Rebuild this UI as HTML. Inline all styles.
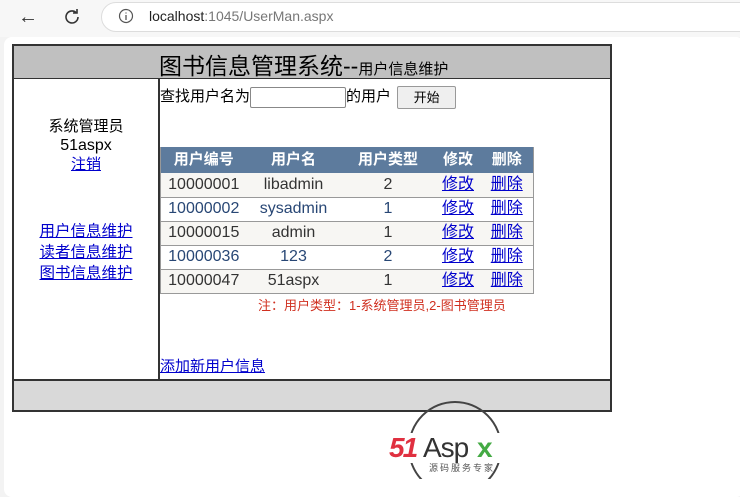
<!DOCTYPE html>
<html><head><meta charset="utf-8"><style>
*{margin:0;padding:0;box-sizing:border-box}
body{width:740px;height:479px;background:#f3f3f3;position:relative;overflow:hidden;font-family:"Liberation Sans","Noto Sans CJK SC",sans-serif;font-size:15px;color:#000}
.a{position:absolute}
a{color:#00c;text-decoration:underline}
.page{left:4px;top:37px;width:740px;height:460px;background:#fff;border-radius:8px}
.g{left:160px;top:147px;width:374px;border-collapse:collapse;font-size:16px}
.g td,.g th{height:24px;line-height:22px;text-align:center;border-bottom:1px solid #999;padding:0}
.g th{background:#5d7b9d;color:#fff;font-weight:bold;height:26px;border:none;font-size:15px}
.g tr.o td{background:#f7f6f3;color:#333}
.g tr.e td{background:#fff;color:#284775}
.g{border-left:1px solid #999;border-right:1px solid #999}
</style></head><body>
<div class="a" style="left:0;top:0;width:740px;height:37px;background:#f7f7f7"></div>
<div class="a" style="left:18px;top:6px;font-size:20px;color:#333">&#8592;</div>
<svg class="a" style="left:62px;top:7px" width="20" height="20" viewBox="0 0 20 20"><path d="M16 10a6 6 0 1 1-2-4.5" fill="none" stroke="#333" stroke-width="1.6"/><path d="M15 2v4h-4" fill="none" stroke="#333" stroke-width="1.6"/></svg>
<div class="a" style="left:101px;top:2px;width:660px;height:30px;border-radius:15px;background:#fff;border:1px solid #ddd"></div>
<svg class="a" style="left:118px;top:8px" width="16" height="16"><circle cx="8" cy="8" r="6.5" fill="none" stroke="#555" stroke-width="1.2"/><path d="M8 7v5M8 4.5v1" stroke="#555" stroke-width="1.3"/></svg>
<div class="a" style="left:149px;top:8px;font-size:14px;color:#222">localhost<span style="color:#777">:1045/UserMan.aspx</span></div>
<div class="a page"></div>
<div class="a" style="left:12px;top:44px;width:600px;height:368px;border:2px solid #333"></div>
<div class="a" style="left:14px;top:46px;width:596px;height:33px;background:#c0c0c0;border-bottom:1px solid #333"></div>
<div class="a" style="left:159px;top:47px;font-size:23px;white-space:nowrap">图书信息管理系统--<span style="font-size:15px">用户信息维护</span></div>
<div class="a" style="left:158px;top:79px;width:2px;height:301px;background:#333"></div>
<div class="a" style="left:14px;top:379px;width:596px;height:31px;background:#d9d9d9;border-top:2px solid #333"></div>
<div class="a" style="left:14px;top:117px;width:166px;text-align:center;line-height:19px;margin-left:-11px">系统管理员<br><span style="font-size:16px">51aspx</span><br><a href="#">注销</a></div>
<div class="a" style="left:14px;top:221px;width:144px;text-align:center;line-height:21px;font-size:15.5px"><a href="#">用户信息维护</a><br><a href="#">读者信息维护</a><br><a href="#">图书信息维护</a></div>
<div class="a" style="left:160px;top:85px;white-space:nowrap">查找用户名为<span style="display:inline-block;width:96px;height:21px;border:1px solid #888;border-radius:2px;vertical-align:middle"></span>的用户 <span style="display:inline-block;width:59px;height:23px;border:1px solid #999;background:#efefef;border-radius:2px;text-align:center;font-size:13px;line-height:21px;vertical-align:middle;margin-left:2px">开始</span></div>
<table class="a g">
<tr><th style="width:86px">用户编号</th><th style="width:94px">用户名</th><th style="width:95px">用户类型</th><th style="width:45px">修改</th><th>删除</th></tr>
<tr class="o"><td>10000001</td><td>libadmin</td><td>2</td><td><a href="#">修改</a></td><td><a href="#">删除</a></td></tr>
<tr class="e"><td>10000002</td><td>sysadmin</td><td>1</td><td><a href="#">修改</a></td><td><a href="#">删除</a></td></tr>
<tr class="o"><td>10000015</td><td>admin</td><td>1</td><td><a href="#">修改</a></td><td><a href="#">删除</a></td></tr>
<tr class="e"><td>10000036</td><td>123</td><td>2</td><td><a href="#">修改</a></td><td><a href="#">删除</a></td></tr>
<tr class="o"><td>10000047</td><td>51aspx</td><td>1</td><td><a href="#">修改</a></td><td><a href="#">删除</a></td></tr>
</table>
<div class="a" style="left:258px;top:295px;font-size:13px;color:#d03020;white-space:nowrap">注：用户类型：1-系统管理员,2-图书管理员</div>
<div class="a" style="left:160px;top:355px"><a href="#">添加新用户信息</a></div>
<svg class="a" style="left:385px;top:400px" width="140" height="79"><circle cx="70" cy="48" r="46" fill="none" stroke="#444" stroke-width="2"/><rect x="4" y="33" width="130" height="30" fill="#fff"/>
<text x="4" y="57" font-family="Liberation Sans" font-weight="bold" font-style="italic" font-size="28" fill="#e03040" letter-spacing="-2">51</text>
<text x="38" y="57" font-family="Liberation Sans" font-size="28" fill="#333" letter-spacing="-1">Asp</text>
<text x="92" y="57" font-family="Liberation Sans" font-weight="bold" font-size="28" fill="#4a4">x</text>
<text x="44" y="71" font-family="Noto Sans CJK SC" font-size="9" fill="#555" letter-spacing="2">源码服务专家</text></svg>
</body></html>
